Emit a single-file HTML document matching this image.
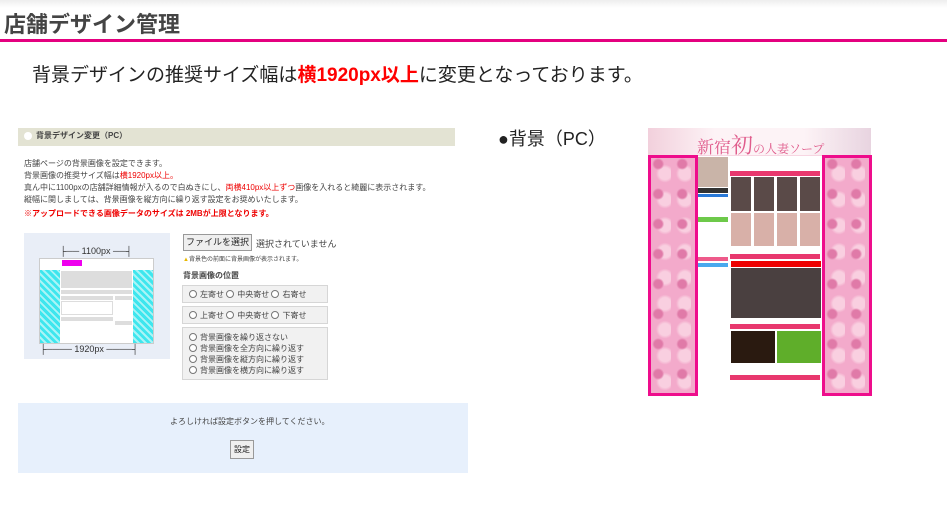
<!DOCTYPE html>
<html><head><meta charset="utf-8"><style>
*{margin:0;padding:0;box-sizing:border-box}
body{width:947px;height:531px;position:relative;background:#fff;font-family:"Liberation Sans","Noto Sans CJK JP",sans-serif;overflow:hidden;color:#333}
.a{position:absolute;white-space:nowrap}
.top{position:absolute;left:0;top:0;width:947px;height:8px;background:linear-gradient(#eee,#fff)}
.r{color:#e00}
.sm{font-size:8px;line-height:12px;color:#444}
.box{position:absolute;background:#f1f1f1;border:1px solid #d6d6d6;font-size:8px;color:#444}
.rad{display:inline-block;width:8px;height:8px;border:1px solid #777;border-radius:50%;vertical-align:-1px;margin-right:3px;background:#fff}
</style></head><body>
<div class="top"></div>
<div class="a" style="left:4px;top:7px;font-size:22px;font-weight:bold;color:#444">店舗デザイン管理</div>
<div class="a" style="left:0;top:39px;width:947px;height:3px;background:#e4007f"></div>
<div class="a" style="left:32px;top:60px;font-size:19px;color:#222">背景デザインの推奨サイズ幅は<b style="color:#f00">横1920px以上</b>に変更となっております。</div>

<div class="a" style="left:18px;top:128px;width:437px;height:18px;background:#e3e3d3"></div>
<div class="a" style="left:24px;top:132px;width:8px;height:8px;border-radius:50%;background:#fff"></div>
<div class="a" style="left:36px;top:130px;font-size:8px;font-weight:bold;color:#444">背景デザイン変更（PC）</div>
<div class="a sm" style="left:24px;top:158px">店舗ページの背景画像を設定できます。<br>背景画像の推奨サイズ幅は<span class="r">横1920px以上。</span><br>真ん中に1100pxの店舗詳細情報が入るので白ぬきにし、<span class="r">両横410px以上ずつ</span>画像を入れると綺麗に表示されます。<br>縦幅に関しましては、背景画像を縦方向に繰り返す設定をお奨めいたします。</div>
<div class="a" style="left:24px;top:208px;font-size:8px;font-weight:bold;color:#e00">※アップロードできる画像データのサイズは 2MBが上限となります。</div>

<div class="a" style="left:24px;top:233px;width:146px;height:126px;background:#e9eef7">
 <div class="a" style="left:36px;top:13px;font-size:9px;color:#333">├── 1100px ──┤</div>
 <div class="a" style="left:15px;top:25px;width:115px;height:86px;background:#fff;border:1px solid #ccc"></div>
 <div class="a" style="left:16px;top:37px;width:20px;height:73px;background:repeating-linear-gradient(45deg,#3ee6ee 0 3px,#aaf4f6 3px 5px)"></div>
 <div class="a" style="left:109px;top:37px;width:20px;height:73px;background:repeating-linear-gradient(45deg,#3ee6ee 0 3px,#aaf4f6 3px 5px)"></div>
 <div class="a" style="left:38px;top:27px;width:20px;height:6px;background:#e0e"></div>
 <div class="a" style="left:37px;top:38px;width:71px;height:17px;background:#ddd"></div>
 <div class="a" style="left:37px;top:57px;width:71px;height:4px;background:#ddd"></div>
 <div class="a" style="left:37px;top:63px;width:52px;height:4px;background:#ddd"></div>
 <div class="a" style="left:91px;top:63px;width:17px;height:4px;background:#ddd"></div>
 <div class="a" style="left:37px;top:68px;width:52px;height:14px;background:#fff;border:1px solid #ddd"></div>
 <div class="a" style="left:37px;top:84px;width:52px;height:4px;background:#ddd"></div>
 <div class="a" style="left:91px;top:88px;width:17px;height:4px;background:#ddd"></div>
 <div class="a" style="left:16px;top:111px;font-size:9px;color:#333">├──── 1920px ────┤</div>
</div>

<div class="a" style="left:183px;top:234px;width:69px;height:17px;background:#efefef;border:1px solid #999;font-size:9px;line-height:15px;text-align:center;color:#222">ファイルを選択</div>
<div class="a" style="left:256px;top:237px;font-size:9px;color:#444">選択されていません</div>
<div class="a" style="left:183px;top:254px;font-size:6px;color:#444"><span style="color:#e9b800">▲</span>背景色の前面に背景画像が表示されます。</div>
<div class="a" style="left:183px;top:270px;font-size:8px;font-weight:bold;color:#444">背景画像の位置</div>
<div class="box" style="left:182px;top:285px;width:146px;height:18px;padding:3px 6px"><span class="rad"></span>左寄せ <span class="rad"></span>中央寄せ <span class="rad"></span>右寄せ</div>
<div class="box" style="left:182px;top:306px;width:146px;height:18px;padding:3px 6px"><span class="rad"></span>上寄せ <span class="rad"></span>中央寄せ <span class="rad"></span>下寄せ</div>
<div class="box" style="left:182px;top:327px;width:146px;height:53px;padding:4px 6px;line-height:11px"><span class="rad"></span>背景画像を繰り返さない<br><span class="rad"></span>背景画像を全方向に繰り返す<br><span class="rad"></span>背景画像を縦方向に繰り返す<br><span class="rad"></span>背景画像を横方向に繰り返す</div>

<div class="a" style="left:18px;top:403px;width:450px;height:70px;background:#e7f0fc"></div>
<div class="a" style="left:170px;top:416px;font-size:8px;color:#444">よろしければ設定ボタンを押してください。</div>
<div class="a" style="left:230px;top:440px;width:24px;height:19px;background:#efefef;border:1px solid #999;font-size:8px;line-height:17px;text-align:center;color:#222">設定</div>

<div class="a" style="left:498px;top:125px;font-size:18px;color:#222">●背景（PC）</div>

<div class="a" style="left:648px;top:128px;width:223px;height:268px;background:#f7d6e2"></div>
<div class="a" style="left:648px;top:128px;width:223px;height:27px;background:linear-gradient(90deg,#f2d0dc,#fdf3f6 30%,#fdf3f6 70%,#e8d4e0)"></div>
<div class="a" style="left:697px;top:129px;font-size:17px;color:#e05c8c;font-family:'Noto Serif CJK SC',serif">新宿<span style="font-size:22px">初</span><span style="font-size:12px">の人妻ソープ</span></div>
<div class="a" style="left:648px;top:155px;width:50px;height:241px;border:3px solid #ee0d8c;background:radial-gradient(circle at 30% 20%,#e07aa8 0 4px,transparent 6px) 0 0/24px 30px,radial-gradient(circle at 70% 60%,#f9cfe0 0 6px,transparent 9px) 0 0/20px 26px,#f3aacb"></div>
<div class="a" style="left:822px;top:155px;width:50px;height:241px;border:3px solid #ee0d8c;background:radial-gradient(circle at 30% 20%,#e07aa8 0 4px,transparent 6px) 0 0/24px 30px,radial-gradient(circle at 70% 60%,#f9cfe0 0 6px,transparent 9px) 0 0/20px 26px,#f3aacb"></div>
<div class="a" style="left:698px;top:156px;width:124px;height:240px;background:#fff"></div>
<div class="a" style="left:698px;top:157px;width:30px;height:30px;background:#c9b4a8"></div>
<div class="a" style="left:698px;top:188px;width:30px;height:5px;background:#333"></div>
<div class="a" style="left:698px;top:194px;width:30px;height:3px;background:#2979d8"></div>
<div class="a" style="left:698px;top:217px;width:30px;height:5px;background:#6dc94a"></div>
<div class="a" style="left:698px;top:257px;width:30px;height:4px;background:#ee5a8a"></div>
<div class="a" style="left:698px;top:263px;width:30px;height:4px;background:#49a9ee"></div>
<div class="a" style="left:730px;top:171px;width:90px;height:5px;background:#e8386e"></div>
<div class="a" style="left:731px;top:177px;width:89px;height:34px;background:repeating-linear-gradient(90deg,#5a4a48 0 20px,#fff 20px 23px)"></div>
<div class="a" style="left:731px;top:213px;width:89px;height:33px;background:repeating-linear-gradient(90deg,#d8b0a8 0 20px,#fff 20px 23px)"></div>
<div class="a" style="left:730px;top:254px;width:90px;height:5px;background:#e8386e"></div>
<div class="a" style="left:731px;top:261px;width:90px;height:6px;background:#e00"></div>
<div class="a" style="left:731px;top:268px;width:90px;height:50px;background:#4a4040"></div>
<div class="a" style="left:730px;top:324px;width:90px;height:5px;background:#e8386e"></div>
<div class="a" style="left:731px;top:331px;width:44px;height:32px;background:#2a1a10"></div>
<div class="a" style="left:777px;top:331px;width:44px;height:32px;background:#5fae2a"></div>
<div class="a" style="left:730px;top:375px;width:90px;height:5px;background:#e8386e"></div>
</body></html>
